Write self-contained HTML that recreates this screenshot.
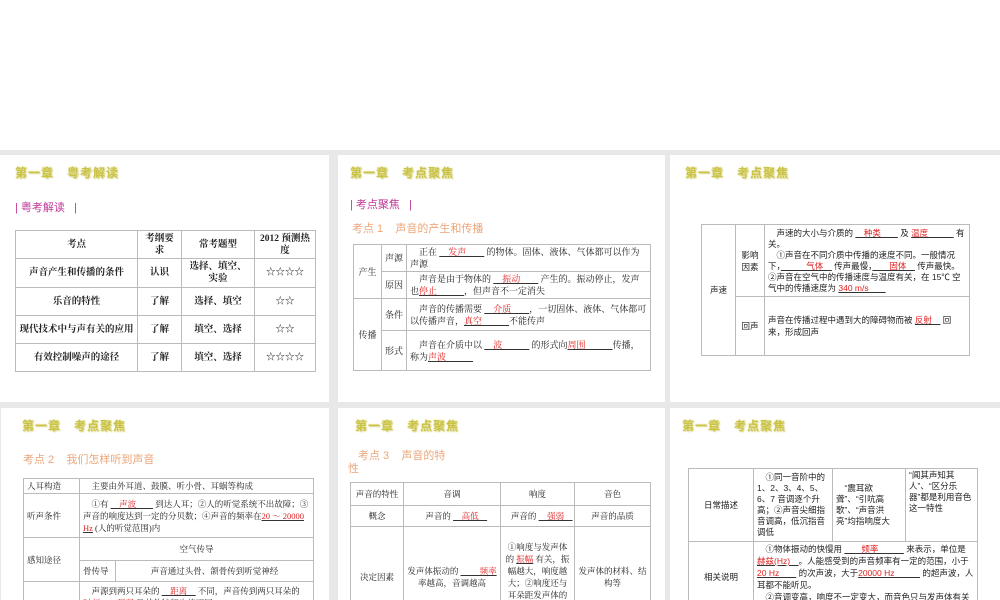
<!DOCTYPE html>
<html><head><meta charset="utf-8"><style>
*{margin:0;padding:0;box-sizing:border-box}
body{width:1000px;height:600px;overflow:hidden;background:#fff;font-family:"Liberation Serif","Noto Serif CJK SC",serif;position:relative}
.bg{position:absolute;left:0;top:150px;width:1000px;height:450px;background:#e8e8e8}
.p{position:absolute;background:#fff;overflow:hidden}
.t{position:absolute;font-family:"Liberation Sans","Noto Sans CJK SC",sans-serif;font-weight:bold;font-size:12px;color:#c9c244;text-shadow:0 0 2px #e8e4a0,1px 1px 1px #ddd8a0;letter-spacing:1px;white-space:pre}
.h{position:absolute;font-family:"Liberation Sans","Noto Sans CJK SC",sans-serif;font-size:11px;color:#c03898;white-space:pre}
.o{position:absolute;font-family:"Liberation Sans","Noto Sans CJK SC",sans-serif;font-size:11px;color:#eba679;white-space:pre}
table{position:absolute;border-collapse:collapse;font-size:9px;color:#222;table-layout:fixed}
td{border:1px solid #bbb;padding:1px 3px;line-height:12px;vertical-align:middle}
.c{text-align:center}
.r{color:#e02020;text-decoration:underline;text-decoration-color:#333}
</style></head><body>
<div class="bg"></div>

<div class="p" style="left:0;top:155px;width:329px;height:247px">
<div class="t" style="left:15px;top:9px">第一章   粤考解读</div>
<div class="h" style="left:15px;top:44px">| 粤考解读   |</div>
<table style="left:15px;top:75px;width:300px;font-weight:bold;font-size:9.5px">
<colgroup><col style="width:122px"><col style="width:44px"><col style="width:73px"><col style="width:61px"></colgroup>
<tr style="height:28px"><td class="c">考点</td><td class="c">考纲要求</td><td class="c">常考题型</td><td class="c">2012 预测热度</td></tr>
<tr style="height:29px"><td class="c">声音产生和传播的条件</td><td class="c">认识</td><td class="c">选择、填空、实验</td><td class="c">☆☆☆☆</td></tr>
<tr style="height:28px"><td class="c">乐音的特性</td><td class="c">了解</td><td class="c">选择、填空</td><td class="c">☆☆</td></tr>
<tr style="height:28px"><td class="c">现代技术中与声有关的应用</td><td class="c">了解</td><td class="c">填空、选择</td><td class="c">☆☆</td></tr>
<tr style="height:28px"><td class="c">有效控制噪声的途径</td><td class="c">了解</td><td class="c">填空、选择</td><td class="c">☆☆☆☆</td></tr>
</table></div>

<div class="p" style="left:338px;top:155px;width:327px;height:247px">
<div class="t" style="left:12px;top:9px">第一章   考点聚焦</div>
<div class="h" style="left:12px;top:41px">| 考点聚焦   |</div>
<div class="o" style="left:14px;top:65px">考点 1    声音的产生和传播</div>
<table style="left:15px;top:89px;width:297px">
<colgroup><col style="width:28px"><col style="width:25px"><col style="width:244px"></colgroup>
<tr style="height:27px"><td rowspan="2" class="c">产生</td><td class="c">声源</td><td>　正在 <span class="r">　发声　　</span> 的物体。固体、液体、气体都可以作为声源</td></tr>
<tr style="height:27px"><td class="c">原因</td><td>　声音是由于物体的 <span class="r">　振动　　</span> 产生的。振动停止，发声也<span class="r">停止　　　</span>，但声音不一定消失</td></tr>
<tr style="height:32px"><td rowspan="2" class="c">传播</td><td class="c">条件</td><td>　声音的传播需要 <span class="r">　介质　　</span>，一切固体、液体、气体都可以传播声音，<span class="r">真空　　　</span>不能传声</td></tr>
<tr style="height:40px"><td class="c">形式</td><td>　声音在介质中以 <span class="r">　波　　　</span> 的形式向<span class="r">周围　　　</span>传播，称为<span class="r">声波　　　</span></td></tr>
</table></div>

<div class="p" style="left:670px;top:155px;width:330px;height:247px">
<div class="t" style="left:15px;top:9px">第一章   考点聚焦</div>
<table style="left:31px;top:69px;width:268px;font-size:8.5px;font-family:'Liberation Sans','Noto Sans CJK SC',sans-serif">
<colgroup><col style="width:34px"><col style="width:29px"><col style="width:205px"></colgroup>
<tr style="height:72px"><td rowspan="2" class="c">声速</td><td class="c">影响因素</td><td style="line-height:11px">　声速的大小与介质的 <span class="r">　种类　　</span> 及 <span class="r">温度　　　</span> 有关。<br>　①声音在不同介质中传播的速度不同。一般情况下，<span class="r">　　　气体　</span> 传声最慢，<span class="r">　　固体　</span> 传声最快。②声音在空气中的传播速度与温度有关，在 15℃ 空气中的传播速度为 <span class="r">340 m/s　　</span></td></tr>
<tr style="height:59px"><td class="c">回声</td><td>声音在传播过程中遇到大的障碍物而被 <span class="r">反射　</span> 回来，形成回声</td></tr>
</table></div>

<div class="p" style="left:1px;top:408px;width:328px;height:192px">
<div class="t" style="left:21px;top:9px">第一章   考点聚焦</div>
<div class="o" style="left:22px;top:43px">考点 2    我们怎样听到声音</div>
<table style="left:22px;top:70px;width:290px;font-size:8.5px">
<colgroup><col style="width:56px"><col style="width:36px"><col style="width:198px"></colgroup>
<tr style="height:13px"><td>人耳构造</td><td colspan="2">　主要由外耳道、鼓膜、听小骨、耳蜗等构成</td></tr>
<tr style="height:44px"><td>听声条件</td><td colspan="2">　①有 <span class="r">　声波　　</span> 到达人耳；②人的听觉系统不出故障；③声音的响度达到一定的分贝数；④声音的频率在<span class="r">20 ～ 20000 Hz</span> (人的听觉范围)内</td></tr>
<tr style="height:23px"><td rowspan="2">感知途径</td><td colspan="2" class="c">空气传导</td></tr>
<tr style="height:21px"><td>骨传导</td><td class="c">声音通过头骨、颌骨传到听觉神经</td></tr>
<tr style="height:30px"><td></td><td colspan="2">　声源到两只耳朵的 <span class="r">　距离　</span> 不同，声音传到两只耳朵的 <span class="r">时刻　　强弱</span> 及其他特征也就不同</td></tr>
</table></div>

<div class="p" style="left:338px;top:408px;width:327px;height:192px">
<div class="t" style="left:17px;top:9px">第一章   考点聚焦</div>
<div class="o" style="left:20px;top:39px">考点 3    声音的特</div>
<div class="o" style="left:10px;top:52px">性</div>
<table style="left:12px;top:74px;width:300px;font-size:8.5px">
<colgroup><col style="width:53px"><col style="width:97px"><col style="width:74px"><col style="width:76px"></colgroup>
<tr style="height:23px"><td class="c">声音的特性</td><td class="c">音调</td><td class="c">响度</td><td class="c">音色</td></tr>
<tr style="height:21px"><td class="c">概念</td><td class="c">声音的 <span class="r">　高低　</span></td><td class="c">声音的 <span class="r">　强弱　</span></td><td class="c">声音的品质</td></tr>
<tr style="height:100px"><td class="c">决定因素</td><td class="c">发声体振动的 <span class="r">　　 频率</span>率越高，音调越高</td><td class="c">①响度与发声体的 <span class="r">振幅</span> 有关，振幅越大，响度越大；②响度还与耳朵距发声体的 <span class="r">远近</span> 有关</td><td class="c">发声体的材料、结构等</td></tr>
</table></div>

<div class="p" style="left:670px;top:408px;width:330px;height:192px">
<div class="t" style="left:12px;top:9px">第一章   考点聚焦</div>
<table style="left:18px;top:60px;width:289px;font-size:8.5px;font-family:'Liberation Sans','Noto Sans CJK SC',sans-serif">
<colgroup><col style="width:65px"><col style="width:79px"><col style="width:73px"><col style="width:72px"></colgroup>
<tr style="height:73px"><td class="c">日常描述</td><td style="line-height:11px">　①同一音阶中的 1、2、3、4、5、6、7 音调逐个升高；②声音尖细指音调高，低沉指音调低</td><td style="line-height:11px">　“震耳欲聋”、“引吭高歌”、“声音洪亮”均指响度大</td><td style="line-height:11px;vertical-align:top">“闻其声知其人”、“区分乐器”都是利用音色这一特性</td></tr>
<tr style="height:70px"><td class="c">相关说明</td><td colspan="3" style="vertical-align:top">　①物体振动的快慢用 <span class="r">　　频率　　　</span> 来表示，单位是 <span class="r">赫兹(Hz)　</span>。人能感受到的声音频率有一定的范围，小于<span class="r">20 Hz　　</span> 的次声波，大于<span class="r">20000 Hz　　　</span> 的超声波，人耳都不能听见。<br>　②音调变高，响度不一定变大，而音色只与发声体有关</td></tr>
</table></div>
</body></html>
